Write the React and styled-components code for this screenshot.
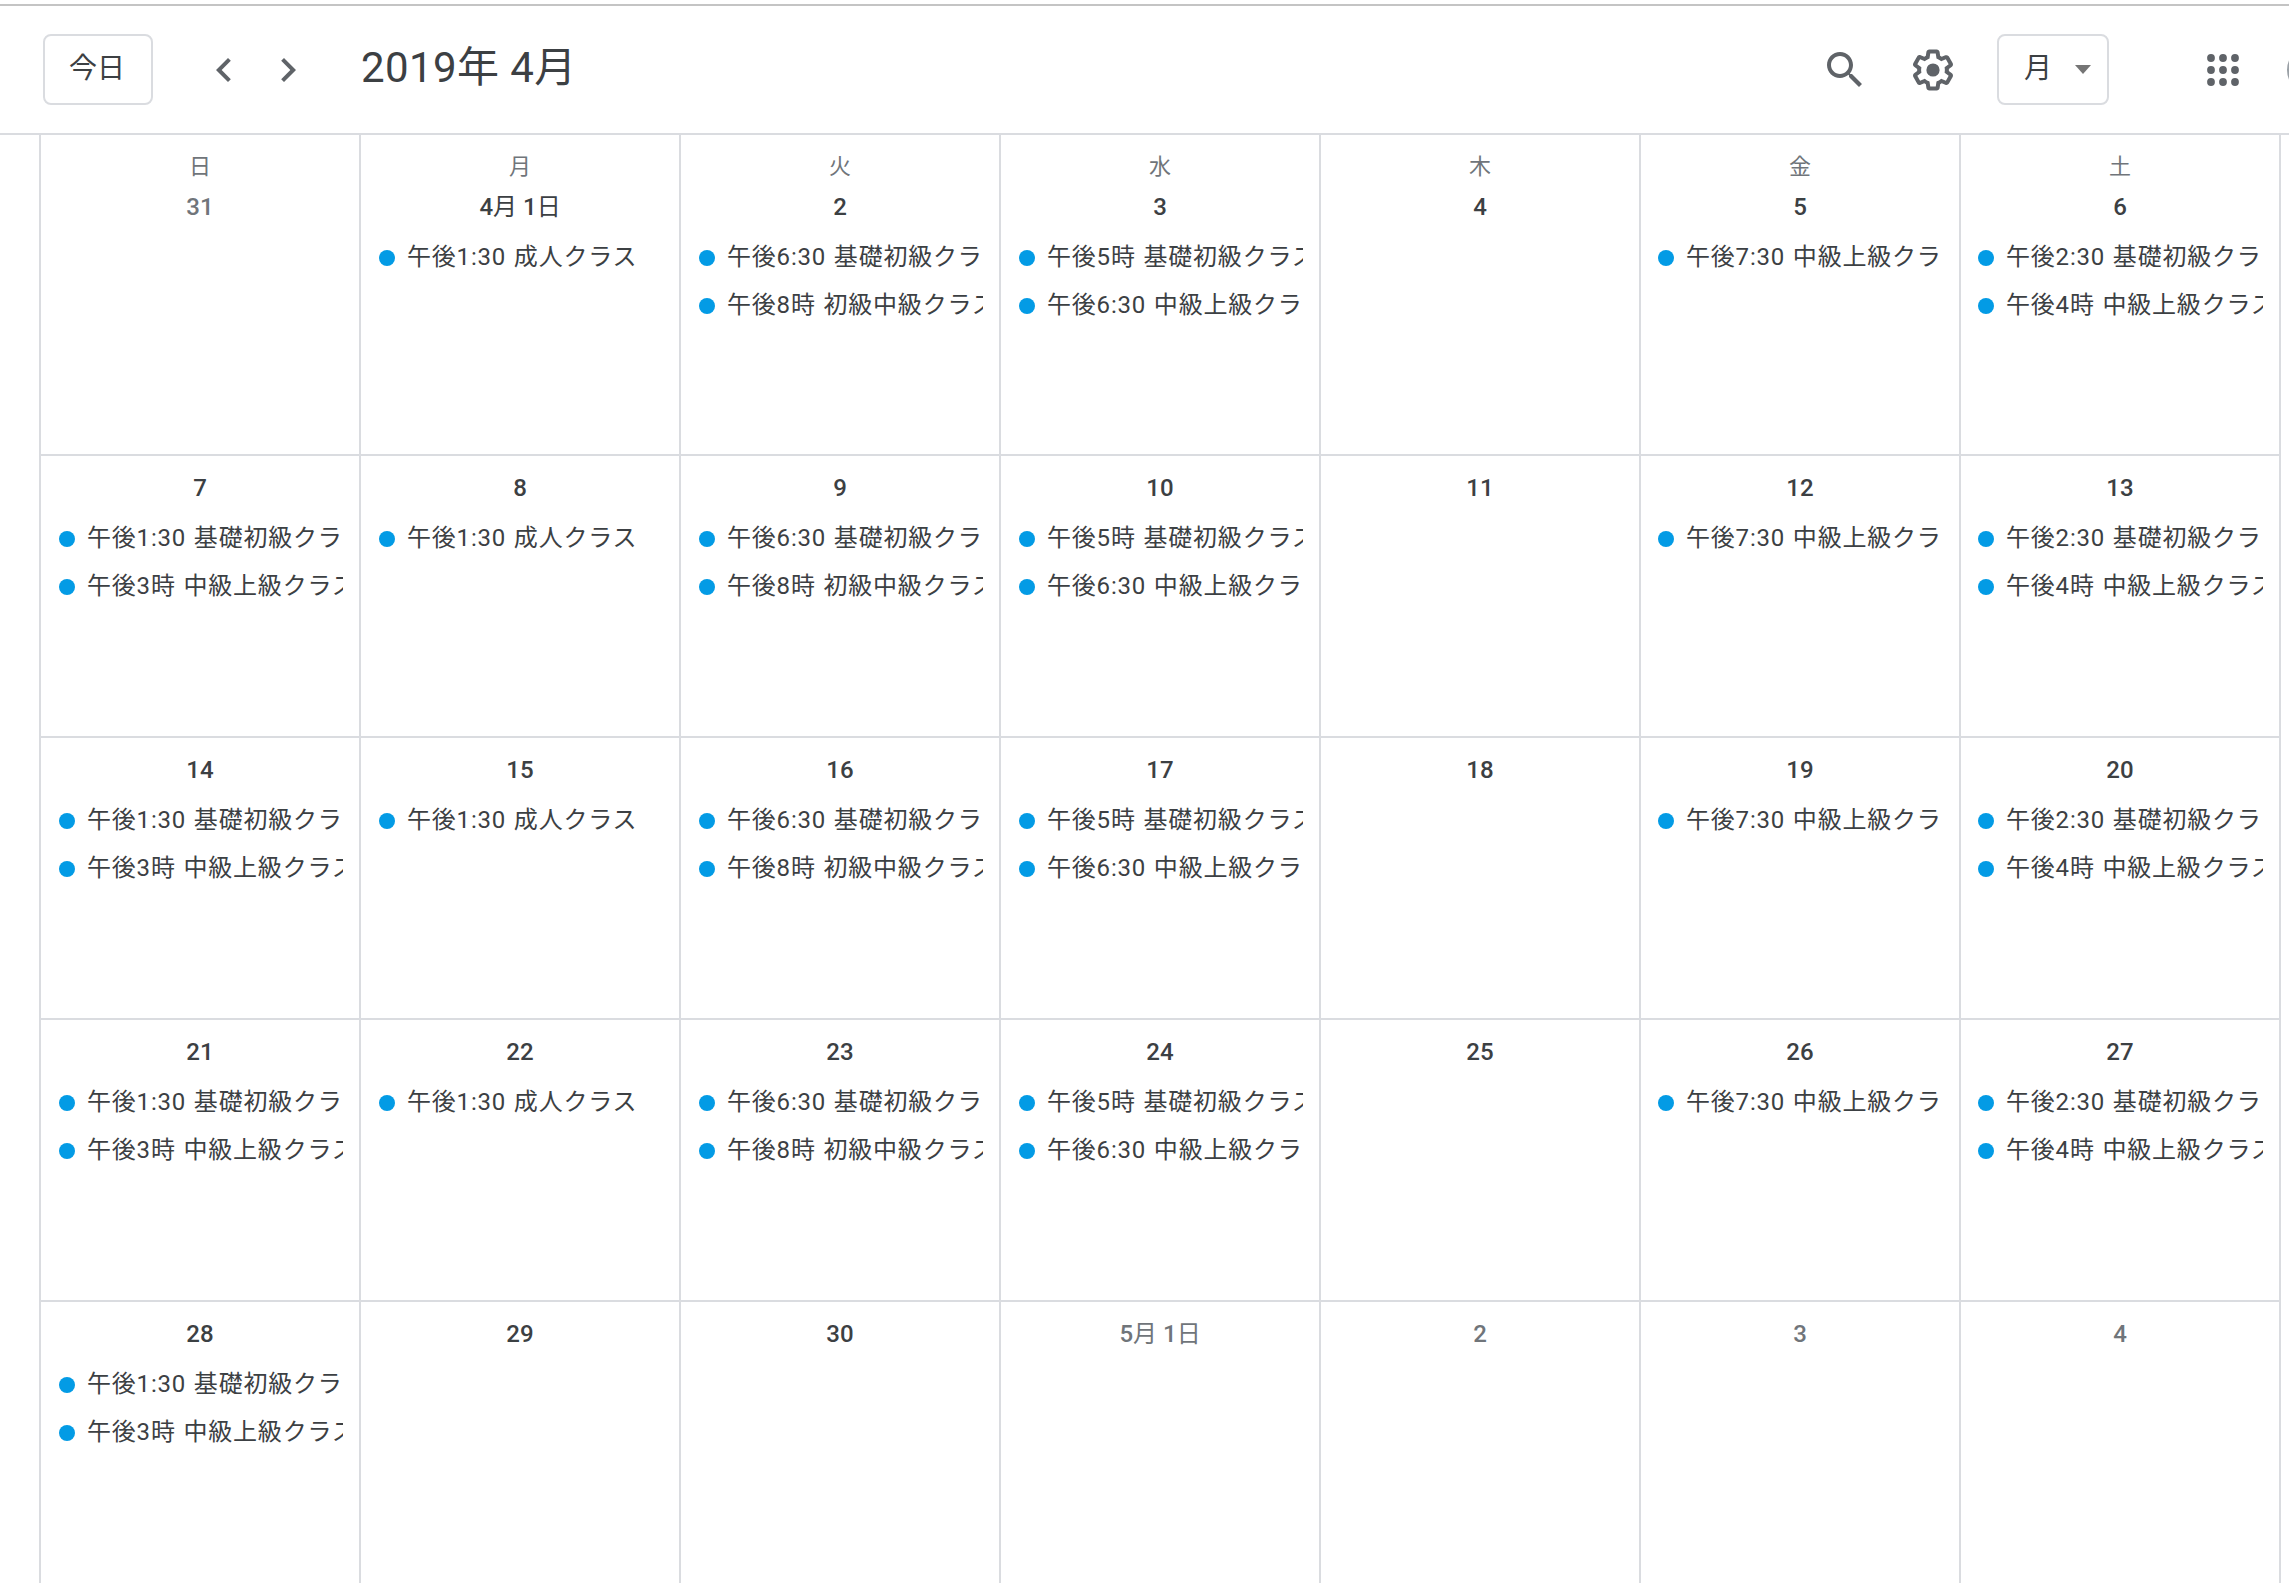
import React from "react";
import styled, { createGlobalStyle } from "styled-components";

const Global = createGlobalStyle`
  html, body { margin: 0; padding: 0; background: #fff; overflow: hidden; }
  body { font-family: Roboto, "Noto Sans CJK JP", sans-serif; color: #3c4043; }
`;
const Page = styled.div`
  width: 2289px; height: 1583px; overflow: hidden; padding-top: 4px; box-sizing: border-box;
`;
const Header = styled.header`
  display: flex; align-items: center; height: 131px; box-sizing: border-box; overflow: hidden;
  border-top: 2px solid #c4c4c4; border-bottom: 2px solid #dadce0; padding-left: 43px;
`;
const OutlineButton = styled.div`
  display: flex; align-items: center; flex-shrink: 0; box-sizing: border-box;
  width: ${p => p.$w}px; height: 71px; margin-left: ${p => p.$ml || 0}px;
  border: 2px solid #dadce0; border-radius: 8px;
  font-size: 28px; line-height: 28px; color: #3c4043; padding: 0 0 1px ${p => p.$pad}px;
`;
const Caret = styled.span`
  width: 0; height: 0; margin: 1px 0 0 23px;
  border-left: 8px solid transparent; border-right: 8px solid transparent; border-top: 9px solid #757575;
`;
const IconBox = styled.span`
  display: flex; width: 48px; height: 48px; flex-shrink: 0; margin-left: ${p => p.$ml}px;
  svg { width: 48px; height: 48px; fill: #5f6368; display: block; }
`;
const Title = styled.h1`
  margin: 0 0 0 49px; padding-bottom: 12px; font-weight: 400; font-size: 42px; letter-spacing: .4px;
  color: #3c4043; white-space: nowrap;
`;
const Spacer = styled.div`flex: 1;`;
const Avatar = styled.span`
  width: 48px; height: 48px; flex-shrink: 0; margin: 0 -46px 0 40px; border-radius: 50%;
  background: #e8e8e8; border: 2px solid #9aa0a6; box-sizing: border-box;
`;
const Grid = styled.div`
  display: grid; grid-template-columns: repeat(7, 320px); grid-template-rows: 321px repeat(3, 282px) 300px;
  width: 2240px; margin-left: 39px; border-left: 2px solid #dadce0;
`;
const Cell = styled.div`
  box-sizing: border-box; border-right: 2px solid #dadce0; border-bottom: 2px solid #dadce0;
  min-width: 0; overflow: hidden; padding-top: 18px;
`;
const Weekday = styled.div`
  text-align: center; font-size: 22px; line-height: 28px; color: #70757a; margin-bottom: 12px;
`;
const DateLabel = styled.div`
  text-align: center; font-size: 24px; font-weight: 500; line-height: 28px;
  color: ${p => p.$muted ? "#70757a" : "#3c4043"}; margin-bottom: 11px;
`;
const Kanji = styled.span`font-weight: 400;`;
const Event = styled.div`
  display: flex; align-items: center; height: 48px; padding-left: ${p => p.$inset}px; box-sizing: border-box; width: 302px;
`;
const Dot = styled.span`
  width: 16px; height: 16px; border-radius: 50%; background: #039be5; flex-shrink: 0; margin: 3px 12px 0 0;
`;
const EventText = styled.span`
  font-size: 24px; white-space: nowrap; overflow: hidden; flex: 1; min-width: 0; color: #3c4043;
  letter-spacing: .8px; word-spacing: 1px; padding-bottom: 4px;
`;

const Search = () => <svg viewBox="0 0 24 24"><path d="M15.5 14h-.79l-.28-.27C15.41 12.59 16 11.11 16 9.5 16 5.91 13.09 3 9.5 3S3 5.91 3 9.5 5.91 16 9.5 16c1.61 0 3.09-.59 4.23-1.57l.27.28v.79l5 4.99L20.49 19l-4.99-5zm-6 0C7.01 14 5 11.99 5 9.5S7.01 5 9.5 5 14 7.01 14 9.5 11.99 14 9.5 14z"/></svg>;
const Gear = () => <svg viewBox="0 0 24 24"><path d="M13.85 22.25h-3.7c-.74 0-1.36-.54-1.45-1.27l-.27-1.89c-.27-.14-.53-.29-.79-.46l-1.8.72c-.7.26-1.47-.03-1.81-.65L2.2 15.53c-.35-.66-.2-1.44.36-1.88l1.53-1.19c-.01-.15-.02-.3-.02-.46 0-.15.01-.31.02-.46l-1.52-1.19c-.59-.45-.74-1.26-.37-1.88l1.85-3.19c.34-.62 1.11-.9 1.79-.63l1.81.73c.26-.17.52-.32.78-.46l.27-1.91c.09-.7.71-1.25 1.44-1.25h3.7c.74 0 1.36.54 1.45 1.27l.27 1.89c.27.14.53.29.79.46l1.8-.72c.71-.26 1.48.03 1.82.65l1.84 3.18c.36.66.2 1.44-.36 1.88l-1.52 1.19c.01.15.02.3.02.46s-.01.31-.02.46l1.52 1.19c.56.45.72 1.23.37 1.86l-1.86 3.22c-.34.62-1.11.9-1.8.63l-1.8-.72c-.26.17-.52.32-.78.46l-.27 1.91c-.1.68-.72 1.22-1.46 1.22zm-3.23-2h2.76l.37-2.55.53-.22c.44-.18.88-.44 1.34-.78l.45-.34 2.38.96 1.38-2.4-2.03-1.58.07-.56c.03-.26.06-.51.06-.78s-.03-.53-.06-.78l-.07-.56 2.03-1.58-1.39-2.4-2.39.96-.45-.35c-.42-.32-.87-.58-1.33-.77l-.52-.22-.37-2.55h-2.76l-.37 2.55-.53.21c-.44.19-.88.44-1.34.79l-.45.33-2.38-.95-1.39 2.39 2.03 1.58-.07.56a7 7 0 0 0-.06.79c0 .26.02.53.06.78l.07.56-2.03 1.58 1.38 2.4 2.39-.96.45.35c.43.33.86.58 1.33.77l.53.22.38 2.55z"/><circle cx="12" cy="12" r="3.3"/></svg>;
const Apps = () => <svg viewBox="0 0 48 48">{[12,24,36].flatMap(y => [12,24,36].map(x => <circle key={x+"-"+y} cx={x} cy={y} r="3.9"/>))}</svg>;

const W = ["日","月","火","水","木","金","土"];
const E = {
  sun: ["午後1:30 基礎初級クラス","午後3時 中級上級クラス"],
  mon: ["午後1:30 成人クラス"],
  tue: ["午後6:30 基礎初級クラス","午後8時 初級中級クラス"],
  wed: ["午後5時 基礎初級クラス","午後6:30 中級上級クラス"],
  thu: [],
  fri: ["午後7:30 中級上級クラス"],
  sat: ["午後2:30 基礎初級クラス","午後4時 中級上級クラス"],
};
const K = ["sun","mon","tue","wed","thu","fri","sat"];
const rows = [
  ["31","4月 1日","2","3","4","5","6"],
  ["7","8","9","10","11","12","13"],
  ["14","15","16","17","18","19","20"],
  ["21","22","23","24","25","26","27"],
  ["28","29","30","5月 1日","2","3","4"],
];
const label = d => d.split(/([月日])/).map((s, i) => i % 2 ? <Kanji key={i}>{s}</Kanji> : s);

export default function App() {
  return (
    <Page>
      <Global />
      <Header>
        <OutlineButton $w={110} $pad={24}>今日</OutlineButton>
        <IconBox $ml={47}><svg viewBox="0 0 24 24"><path d="M15.41 7.41L14 6l-6 6 6 6 1.41-1.41L10.83 12z"/></svg></IconBox>
        <IconBox $ml={16}><svg viewBox="0 0 24 24"><path d="M8.59 16.59L10 18l6-6-6-6-1.41 1.41L13.17 12z"/></svg></IconBox>
        <Title>2019年 4月</Title>
        <Spacer />
        <IconBox $ml={0}><Search /></IconBox>
        <IconBox $ml={40}><Gear /></IconBox>
        <OutlineButton $ml={40} $w={112} $pad={25}>月<Caret /></OutlineButton>
        <IconBox $ml={90}><Apps /></IconBox>
        <Avatar />
      </Header>
      <Grid>
        {rows.flatMap((row, r) => row.map((d, c) => {
          const muted = (r === 0 && c === 0) || (r === 4 && c >= 3);
          const evs = (r === 4 && c > 0) || (r === 0 && c === 0) ? [] : E[K[c]];
          return (
            <Cell key={r + "-" + c}>
              {r === 0 && <Weekday>{W[c]}</Weekday>}
              <DateLabel $muted={muted}>{label(d)}</DateLabel>
              {evs.map(t => <Event key={t} $inset={c >= 5 ? 17 : 18}><Dot /><EventText>{t}</EventText></Event>)}
            </Cell>
          );
        }))}
      </Grid>
    </Page>
  );
}
